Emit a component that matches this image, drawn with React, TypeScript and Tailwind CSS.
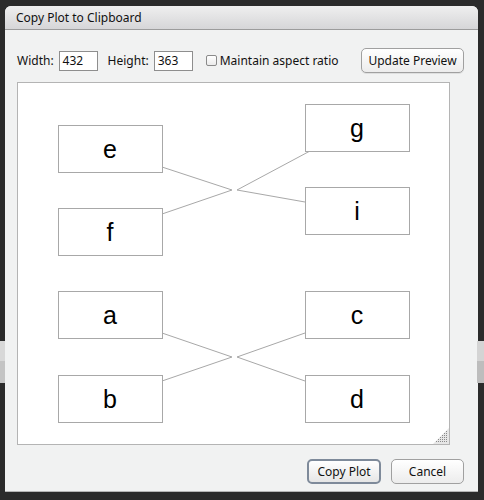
import React from 'react';

const font = { fontFamily: '"Lucida Grande", "Noto Sans", "Liberation Sans", sans-serif' };

const Box = ({ x, y, label }: { x: number; y: number; label: string }) => (
  <g>
    <rect x={x + 0.5} y={y + 0.5} width={104} height={47} fill="#fff" stroke="#a8a8a8" />
    <text x={x + 52} y={y + 33} textAnchor="middle" fontSize={25} fontFamily='"Liberation Sans", Arial, sans-serif' fill="#000">
      {label}
    </text>
  </g>
);

const PlotPreview = () => {
  const boxes = [
    { x: 40, y: 42, label: 'e' },
    { x: 40, y: 125, label: 'f' },
    { x: 287, y: 21, label: 'g' },
    { x: 287, y: 104, label: 'i' },
    { x: 40, y: 208, label: 'a' },
    { x: 40, y: 292, label: 'b' },
    { x: 287, y: 208, label: 'c' },
    { x: 287, y: 292, label: 'd' },
  ];
  // lines from box edges to the two meeting points
  const lines = [
    [144, 84, 214, 107],
    [144, 131, 214, 107],
    [292, 68, 219, 107],
    [287, 119, 219, 107],
    [144, 250, 214, 274],
    [144, 298, 214, 274],
    [287, 250, 219, 274],
    [287, 298, 219, 274],
  ];
  return (
    <svg width={431} height={361} className="block">
      {lines.map(([x1, y1, x2, y2], i) => (
        <line key={i} x1={x1} y1={y1} x2={x2} y2={y2} stroke="#a8a8a8" strokeWidth={1} />
      ))}
      {boxes.map((b) => (
        <Box key={b.label} {...b} />
      ))}
    </svg>
  );
};

const ResizeGrip = () => (
  <svg width={16} height={16} className="absolute right-0 bottom-0">
    <path d="M16 0 L16 16 L0 16 Z" fill="#e6e6e6" />
    {Array.from({ length: 6 }).map((_, r) =>
      Array.from({ length: 6 }).map((_, c) =>
        r + c >= 5 ? <rect key={`${r}-${c}`} x={3 + c * 2} y={3 + r * 2} width={1} height={1} fill="#8a8a8a" /> : null
      )
    )}
  </svg>
);

export default function App() {
  return (
    <div className="relative w-[484px] h-[500px] bg-[#2b2b2b] overflow-hidden pt-[6px] pl-[5px]" style={font}>
      {/* bits of the app behind the dialog */}
      <div className="absolute left-0 top-[341px] w-[5px] h-[20px] bg-[#d8d8d8]" />
      <div className="absolute left-0 top-[361px] w-[5px] h-[22px] bg-[#c4c4c4]" />
      <div className="absolute right-0 top-[341px] w-[7px] h-[20px] bg-[#d4d4d4]" />
      <div className="absolute right-0 top-[361px] w-[7px] h-[22px] bg-[#bdbdbd]" />

      <div className="w-[473px] h-[486px] flex flex-col rounded-t-[6px] overflow-hidden bg-[#f1f2f2] border-b border-[#b5b5b5]">
        <div className="h-[24px] shrink-0 flex items-center px-[11px] text-[12px] text-[#111] bg-gradient-to-b from-[#efefef] to-[#d6d6d8] border-b border-[#9c9c9c]">
          Copy Plot to Clipboard
        </div>

        <div className="flex flex-col pl-[12px] pr-[14px]">
          <div className="flex items-center h-[25px] mt-[18px] text-[12px] text-[#111]">
            <span>Width:</span>
            <div className="ml-[5px] w-[39px] h-[20px] bg-white border border-[#8e8e8e] flex items-center px-[3px]">432</div>
            <span className="ml-[10px]">Height:</span>
            <div className="ml-[5px] w-[39px] h-[20px] bg-white border border-[#8e8e8e] flex items-center px-[3px]">363</div>
            <div className="ml-[13px] w-[11px] h-[11px] rounded-[2px] border border-[#8a8a8a] bg-gradient-to-b from-white to-[#ebebeb]" />
            <span className="ml-[3px]">Maintain aspect ratio</span>
            <div className="ml-auto w-[103px] h-[25px] rounded-[5px] border border-[#a0a0a0] bg-gradient-to-b from-white to-[#ececec] flex items-center justify-center shadow-[0_1px_0_rgba(0,0,0,0.08)]">
              Update Preview
            </div>
          </div>

          <div className="relative mt-[9px] w-[433px] h-[363px] bg-white border border-[#b4b4b4]">
            <PlotPreview />
            <ResizeGrip />
          </div>

          <div className="flex justify-end gap-[10px] mt-[14px] text-[12px] text-[#111]">
            <div className="w-[74px] h-[25px] rounded-[5px] border-2 border-[#7e8a9a] bg-gradient-to-b from-white to-[#e6e6e6] flex items-center justify-center">
              Copy Plot
            </div>
            <div className="w-[73px] h-[25px] rounded-[5px] border border-[#a0a0a0] bg-gradient-to-b from-white to-[#ececec] flex items-center justify-center">
              Cancel
            </div>
          </div>
        </div>
      </div>
    </div>
  );
}
